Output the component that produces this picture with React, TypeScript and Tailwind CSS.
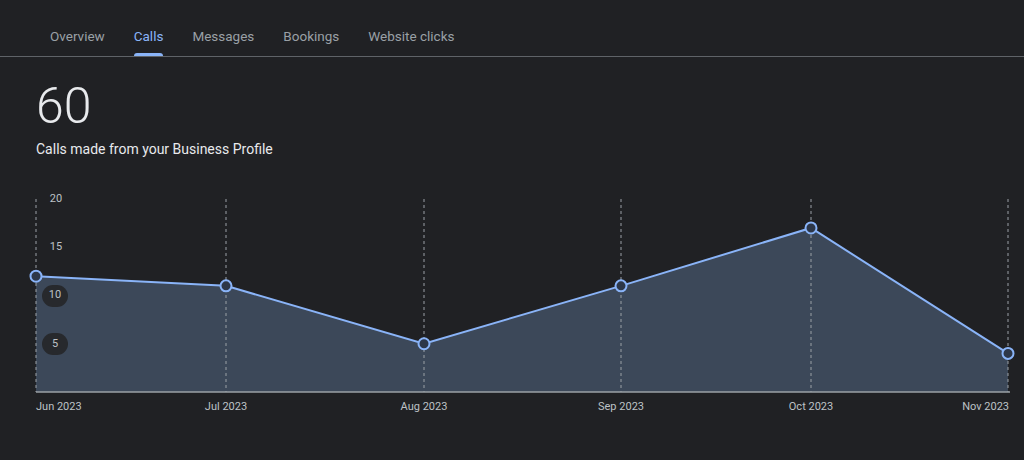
import React from "react";

const xs = [36, 226, 424, 621, 811, 1008];
const vals = [12, 11, 5, 11, 17, 4];
const months = ["Jun 2023", "Jul 2023", "Aug 2023", "Sep 2023", "Oct 2023", "Nov 2023"];
const top = 190;
const base = 391 - top;
const y = (v: number) => base - v * 9.65;

export default function App() {
  const pts = xs.map((x, i) => `${x},${y(vals[i])}`).join(" ");
  return (
    <div className="w-[1024px] h-[460px] bg-[#202124] overflow-hidden" style={{ fontFamily: "Roboto, sans-serif" }}>
      <div className="flex gap-[29px] pl-[50px] h-[57px] border-b border-[#5f6368] text-[13.5px] text-[#9aa0a6]">
        {["Overview", "Calls", "Messages", "Bookings", "Website clicks"].map((t) => (
          <div key={t} className={`relative pt-[26px] ${t === "Calls" ? "text-[#8ab4f8]" : ""}`}>
            {t}
            {t === "Calls" && <div className="absolute bottom-0 left-0 right-0 h-[3px] rounded-t bg-[#8ab4f8]" />}
          </div>
        ))}
      </div>
      <div className="pl-[36px] pt-[24px]">
        <div className="text-[50px] leading-[50px] font-light text-[#e8eaed]">60</div>
        <div className="mt-[8px] text-[14px] text-[#e8eaed]">Calls made from your Business Profile</div>
      </div>
      <div className="relative mt-[31px] h-[230px]">
        <svg width="1024" height="210" className="absolute left-0 top-0">
          <polygon points={`${xs[0]},${base} ${pts} ${xs[5]},${base}`} fill="#3c4859" />
          {xs.map((x) => (
            <line key={x} x1={x} x2={x} y1={8} y2={base} stroke="#9aa0a6" strokeWidth="1" strokeDasharray="3 3" />
          ))}
          <line x1={36} x2={1010} y1={base} y2={base} stroke="#9aa0a6" strokeWidth="1.5" />
          <polyline points={pts} fill="none" stroke="#8ab4f8" strokeWidth="2" />
          {xs.map((x, i) => (
            <circle key={x} cx={x} cy={y(vals[i])} r="5.5" fill="#2d3748" stroke="#8ab4f8" strokeWidth="2" />
          ))}
        </svg>
        {[20, 15, 10, 5].map((v) => (
          <div
            key={v}
            className={`absolute left-[43px] h-[22px] flex items-center justify-center rounded-full text-[11px] text-[#bdc1c6] ${v <= 10 ? "bg-[#27292d] w-[26px] -ml-[1px]" : "w-[26px]"}`}
            style={{ top: y(v) - 11 }}
          >
            {v}
          </div>
        ))}
        {months.map((m, i) => (
          <div
            key={m}
            className="absolute top-[208px] text-[11px] text-[#bdc1c6] whitespace-nowrap"
            style={{ left: i === 0 ? 36 : i === 5 ? undefined : xs[i], right: i === 5 ? 15 : undefined, transform: i > 0 && i < 5 ? "translateX(-50%)" : undefined }}
          >
            {m}
          </div>
        ))}
      </div>
    </div>
  );
}
